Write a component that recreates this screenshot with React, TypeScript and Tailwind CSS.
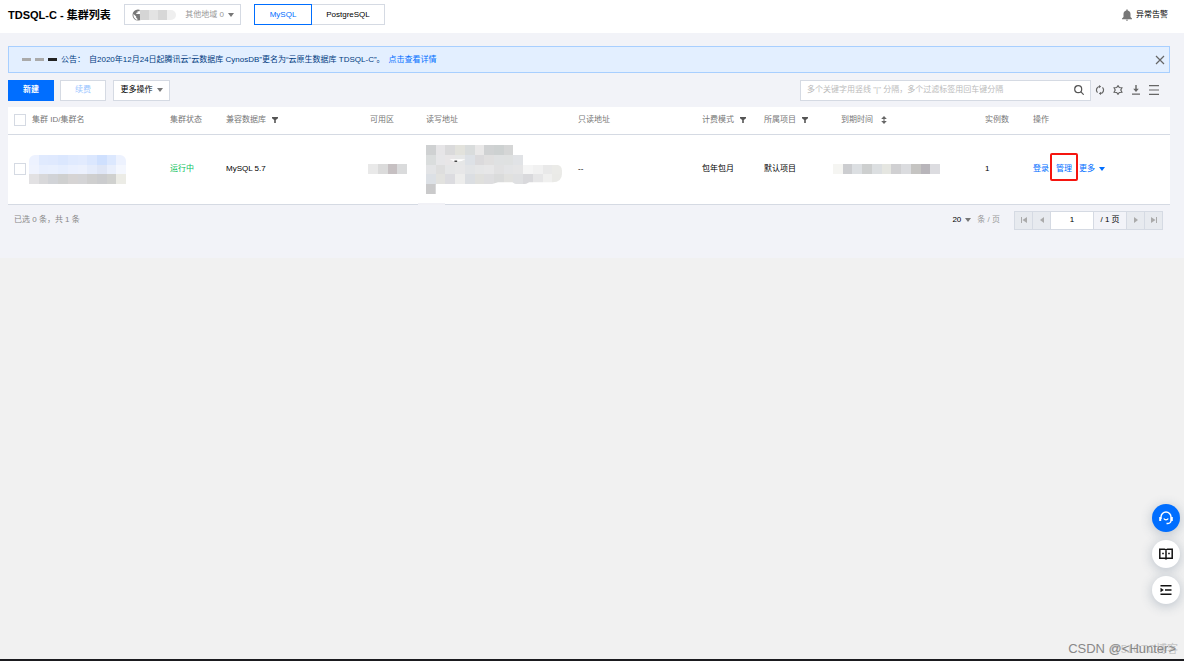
import React, { useState } from 'react';

interface MosaicProps {
  rows: string[][];
  className?: string;
  clip?: string;
  children?: React.ReactNode;
}

const CELL = 29;

// Censored values: a patchwork of soft blocks, rows may differ in length
const Mosaic: React.FC<MosaicProps> = ({ rows, className = '', clip, children }) => {
  const id = React.useId();
  const cols = Math.max(...rows.map((row) => row.length));
  return (
    <svg
      className={`block max-w-none ${className}`}
      viewBox={`0 0 ${cols * CELL} ${rows.length * CELL}`}
      preserveAspectRatio="none"
      aria-hidden="true"
    >
      {clip && (
        <clipPath id={id}>
          <path d={clip} />
        </clipPath>
      )}
      <g clipPath={clip ? `url(#${id})` : undefined} shapeRendering="crispEdges">
        {rows.map((row, y) =>
          row.map((fill, x) => (
            <rect key={`${x}-${y}`} x={x * CELL} y={y * CELL} width={CELL} height={CELL} fill={fill} />
          ))
        )}
      </g>
      {children}
    </svg>
  );
};

const idRows = [
  ['#edf2ff', '#e0eafe', '#dfe9fe', '#dbe7fe', '#e0eafe', '#e2ebfe', '#dbe7fe', '#cfe0fe', '#dce8fe', '#edf2fe'],
  ['#eff3fe', '#e8effe', '#e9f0fe', '#e6eefe', '#eaf0fe', '#ecf1fd', '#e5ecfb', '#dfe6f6', '#e9effc', '#f4f7fe'],
  ['#e2e1e3', '#d8d8da', '#d1d3d7', '#cfd0d0', '#d6d4d4', '#d4d4d6', '#cfcfcf', '#cbccce', '#d0d1cf', '#ecece6'],
];

const zoneRows = [['#e9e9e9', '#dbdbdb', '#c6c0c2', '#dadbdc']];

const addressRows = [
  ['#cfd1d2', '#e6e5e7', '#dadadb', '#e2e2dc', '#d9dcdc', '#e9e8e8', '#d0d2d3', '#cdd1d1', '#d5d6d6'],
  ['#dadddd', '#e6e6e8', '#e8e6e7', '#e6e7e7', '#dde1e6', '#dbdadc', '#e0dfdf', '#dfe1e2', '#dfe1e1', '#e1e3e6'],
  ['#e3e4e6', '#dedede', '#e5e6e7', '#e7e7e8', '#e2e4e6', '#e5e6e7', '#e7e7e8', '#e1e1e2', '#e3e4e6', '#e5e5e6', '#f5f5f5', '#f1f1f1', '#e9e9e9', '#ebebe8'],
  ['#dce0e5', '#e2e2df', '#dcdce0', '#ededec', '#dbdee2', '#e0e0dd', '#dedee0', '#dadbdb', '#e1e1df', '#dfe0e2', '#d9d9dc', '#e6e6e7', '#f0f0ef', '#eaeae7'],
  ['#cacacb'],
];

const dateRows = [
  ['#f5f5f2', '#cccdd0', '#dcdfe2', '#cdcfcf', '#dcdfe1', '#e5e6e1', '#d0d0d2', '#dbdcdf', '#c5c4c2', '#b8b5ba', '#dcdce0'],
];

const regionRows = [['#d5d5d5', '#e3e3e3', '#d7d7d7', '#efefef']];

const Caret: React.FC<{ className?: string }> = ({ className = '' }) => (
  <svg className={`h-1 w-1.5 ${className}`} viewBox="0 0 6 4" fill="currentColor" aria-hidden="true">
    <path d="M0 0h6L3 4z" />
  </svg>
);

const FilterIcon = () => (
  <svg className="size-1.5" viewBox="0 0 6 6" fill="#555" aria-hidden="true">
    <path d="M0 0h6v1.2L3.8 3v3H2.2V3L0 1.2z" />
  </svg>
);

const SortIcon = () => (
  <svg className="ml-0.5 h-2 w-1.5" viewBox="0 0 6 8" fill="#666" aria-hidden="true">
    <path d="M3 0l2.8 3H.2zM3 8L.2 5h5.6zM2.5 2h1v4h-1z" />
  </svg>
);

const columns = [
  { title: '集群 ID/集群名', width: 'w-[138px]' },
  { title: '集群状态', width: 'w-14' },
  { title: '兼容数据库', width: 'w-36', icon: <FilterIcon /> },
  { title: '可用区', width: 'w-14' },
  { title: '读写地址', width: 'w-[152px]' },
  { title: '只读地址', width: 'w-[124px]' },
  { title: '计费模式', width: 'w-[62px]', icon: <FilterIcon /> },
  { title: '所属项目', width: 'w-[77px]', icon: <FilterIcon /> },
  { title: '到期时间', width: 'w-36', icon: <SortIcon /> },
  { title: '实例数', width: 'w-12' },
  { title: '操作', width: '' },
];

const Checkbox: React.FC<{ label: string }> = ({ label }) => (
  <input
    type="checkbox"
    aria-label={label}
    className="ml-1.5 block size-3 appearance-none border border-[#d5dae3] bg-white checked:bg-[#006eff]"
  />
);

const Header: React.FC = () => {
  const [engine, setEngine] = useState('MySQL');
  const active = 'relative border-[#006eff] text-[#006eff]';
  const idle = 'border-[#d5dae3] text-black';

  return (
    <header className="flex h-[33px] items-center bg-white pb-1 pl-2 pr-4">
      <h1 className="w-[116px] whitespace-nowrap text-[11px] font-bold leading-4 text-black">TDSQL-C - 集群列表</h1>
      <button className="flex h-[21px] w-[117px] items-center border border-[#d5dae3] pl-[7px] pr-1.5 text-[#999]">
        <svg className="size-3 shrink-0" viewBox="0 0 12 12" aria-hidden="true">
          <circle cx="6" cy="6" r="5.5" fill="#777" />
          <path
            d="M1.500 5l2.700 2.500v1.200l1.200 1v1.300C2.800 10.500 1 7.800 1.500 5zM7.500 1.300v1H5.500v1.400H4.300v1.200h3.600v2l1.600 1.200C11.200 6 10.500 2.500 7.500 1.300z"
            fill="#fff"
          />
        </svg>
        <Mosaic rows={regionRows} className="-ml-1 h-2.5 w-9 rounded-r-full" />
        <span className="ml-auto">其他地域 0</span>
        <Caret className="ml-1 text-[#777]" />
      </button>
      <div className="ml-[13px] flex">
        <button
          onClick={() => setEngine('MySQL')}
          className={`h-[21px] w-[58px] border ${engine === 'MySQL' ? active : idle}`}
        >
          MySQL
        </button>
        <button
          onClick={() => setEngine('PostgreSQL')}
          className={`-ml-px h-[21px] w-[74px] border ${engine === 'PostgreSQL' ? active : idle}`}
        >
          PostgreSQL
        </button>
      </div>
      <a href="#alarm" className="ml-auto flex items-center gap-1 text-black">
        <svg className="h-3 w-2.5" viewBox="0 0 10 12" fill="#777" aria-hidden="true">
          <path d="M4.300 .5h1.400v1C7.500 1.900 8.500 3.300 8.500 5v3L10 9.500v.7H0v-.7L1.500 8V5c0-1.700 1-3.100 2.800-3.500zM3.700 10.800h2.600L5 12z" />
        </svg>
        异常告警
      </a>
    </header>
  );
};

const Notice: React.FC<{ onClose: () => void }> = ({ onClose }) => (
  <div className="flex h-[27px] items-center border border-[#a8cfff] bg-[#e3efff] pl-[13px] pr-1 text-[#003b80]">
    <div className="flex gap-1">
      <i className="h-[3px] w-[9px] bg-[#aaa]" />
      <i className="h-[3px] w-[9px] bg-[#aaa]" />
      <i className="h-[3px] w-[9px] bg-[#222]" />
    </div>
    <p className="ml-1 flex gap-1 whitespace-nowrap">
      <span>公告：</span>
      <span>自2020年12月24日起腾讯云“云数据库 CynosDB”更名为“云原生数据库 TDSQL-C”。</span>
      <a href="#detail" className="text-[#006eff]">点击查看详情</a>
    </p>
    <button aria-label="关闭" onClick={onClose} className="ml-auto">
      <svg className="size-2.5" viewBox="0 0 10 10" stroke="#666" strokeWidth="1.2" fill="none">
        <path d="M1 1l8 8M9 1L1 9" />
      </svg>
    </button>
  </div>
);

const Toolbar = () => (
  <div className="mt-1.5 flex h-[22px] items-center">
    <button className="h-[21px] w-[46px] bg-[#006eff] font-bold text-white">新建</button>
    <button disabled className="ml-1.5 h-[21px] w-[46px] border border-[#d5dae3] bg-white text-[#99c5ff]">续费</button>
    <button className="ml-[7px] flex h-[21px] w-[57px] items-center justify-center gap-1 border border-[#d5dae3] bg-white text-black">
      更多操作
      <Caret className="text-[#777]" />
    </button>
    <div className="ml-auto flex h-[21px] w-[291px] items-center border border-[#d5dae3] bg-white px-1.5">
      <input
        aria-label="搜索"
        placeholder={'多个关键字用竖线 "|" 分隔，多个过滤标签用回车键分隔'}
        className="min-w-0 flex-1 outline-none placeholder:text-[#bbb]"
      />
      <button aria-label="查询">
        <svg className="size-2.5" viewBox="0 0 10 10" fill="none" stroke="#555" strokeWidth="1.2">
          <circle cx="4.200" cy="4.200" r="3.500" />
          <path d="M6.700 6.700L9.700 9.700" />
        </svg>
      </button>
    </div>
    <div className="ml-1 mr-[11px] flex items-center gap-2 text-[#666]">
      <button aria-label="刷新">
        <svg className="size-2.5" viewBox="0 0 10 10" fill="none" stroke="currentColor" strokeWidth="1.200">
          <path d="M4.300 1.500A3.600 3.600 0 0 0 2.500 7.600M5.700 8.500A3.600 3.600 0 0 0 7.500 2.400" />
          <path d="M4 0L6.200 1.500L4 3.200zM6 10L3.800 8.500L6 6.800z" fill="currentColor" stroke="none" />
        </svg>
      </button>
      <button aria-label="设置">
        <svg className="size-2.5" viewBox="0 0 10 10" fill="none" stroke="currentColor" strokeWidth="1.200">
          <path d="M5 .7L6.300 2.500L8.900 2.700L7.800 5L8.900 7.300L6.300 7.500L5 9.300L3.700 7.500L1.100 7.300L2.200 5L1.100 2.700L3.700 2.500z" />
        </svg>
      </button>
      <button aria-label="下载">
        <svg className="size-2.5" viewBox="0 0 10 10" fill="currentColor">
          <path d="M4.300 0h1.400v3.800H7.800L5 7L2.200 3.800h2.100zM1 8.400h8v1.300H1z" />
        </svg>
      </button>
      <button aria-label="更多">
        <svg className="size-2.5" viewBox="0 0 10 10" fill="currentColor">
          <path d="M0 0h10v1.200H0zM0 4.400h10v1.200H0zM0 8.800h10v1.200H0z" />
        </svg>
      </button>
    </div>
  </div>
);

const ClusterTable = () => (
  <table className="mt-1.5 w-full table-fixed border-collapse bg-white text-left">
    <thead>
      <tr className="h-[27px] border-b border-[#d5dae3] text-[#777]">
        <th className="w-6 p-0">
          <Checkbox label="全选" />
        </th>
        {columns.map((col) => (
          <th key={col.title} className={`p-0 font-normal ${col.width}`}>
            <span className="flex items-center gap-1.5 whitespace-nowrap">
              {col.title}
              {col.icon}
            </span>
          </th>
        ))}
      </tr>
    </thead>
    <tbody>
      <tr className="h-[70px] border-b border-[#d5dae3] text-black">
        <td className="p-0">
          <Checkbox label="选择集群" />
        </td>
        <td className="p-0">
          <Mosaic rows={idRows} className="-ml-[3px] h-[29px] w-[97px] rounded-t-md" />
        </td>
        <td className="p-0 text-[#0abf5b]">运行中</td>
        <td className="p-0">MySQL 5.7</td>
        <td className="p-0">
          <Mosaic rows={zoneRows} className="-ml-0.5 h-2.5 w-[39px]" />
        </td>
        <td className="relative p-0">
          <Mosaic
            rows={addressRows}
            className="h-[49px] w-[136px]"
            clip="M0 0H264V29H290V58H385Q406 58 406 76V85Q406 110 378 110H308Q300 116 290 116H274Q264 116 258 110H215L195 116H29V145H0z"
          >
            <path d="M70 42H118Q94 56 70 42z" fill="#fff" />
            <path d="M85 46h8v4h-8z" fill="#333" />
          </Mosaic>
          <span className="absolute -bottom-px -left-2 h-0.5 w-[27px] bg-[#f1f1f6]" />
        </td>
        <td className="p-0">--</td>
        <td className="p-0">包年包月</td>
        <td className="p-0">默认项目</td>
        <td className="p-0">
          <Mosaic rows={dateRows} className="-ml-2 h-2.5 w-[107px]" />
        </td>
        <td className="p-0">1</td>
        <td className="p-0">
          <div className="flex items-center gap-[7px] whitespace-nowrap text-[#006eff]">
            <a href="#login">登录</a>
            <a href="#manage" className="relative">
              管理
              <span className="absolute -inset-x-1.5 -bottom-1.5 -top-2.5 rounded-xs border-2 border-[#f5150f]" />
            </a>
            <a href="#more" className="flex items-center gap-1">
              更多
              <Caret />
            </a>
          </div>
        </td>
      </tr>
    </tbody>
  </table>
);

const pageButton = 'flex w-[18px] items-center justify-center border-r border-[#d5dae3] bg-[#e7eaef] text-[#aaa]';

const Pagination = () => (
  <div className="mr-[7px] flex items-center">
    <button className="flex items-center gap-1 text-black">
      20
      <Caret className="text-[#777]" />
    </button>
    <span className="ml-1.5 text-[#999]">条 / 页</span>
    <div className="ml-3.5 flex h-[19px] border border-r-0 border-[#d5dae3]">
      <button aria-label="首页" className={pageButton}>
        <svg className="size-1.5" viewBox="0 0 6 6" fill="currentColor">
          <path d="M0 0h1v6H0zM6 0v6L1.500 3z" />
        </svg>
      </button>
      <button aria-label="上一页" className={pageButton}>
        <svg className="size-1.5" viewBox="0 0 6 6" fill="currentColor">
          <path d="M5 0v6L1 3z" />
        </svg>
      </button>
      <input
        aria-label="页码"
        defaultValue="1"
        className="w-[43px] border-r border-[#d5dae3] bg-white text-center text-black"
      />
      <span className="flex w-[33px] items-center justify-center border-r border-[#d5dae3] text-black">/ 1 页</span>
      <button aria-label="下一页" className={pageButton}>
        <svg className="size-1.5" viewBox="0 0 6 6" fill="currentColor">
          <path d="M1 0v6l4-3z" />
        </svg>
      </button>
      <button aria-label="尾页" className={pageButton}>
        <svg className="size-1.5" viewBox="0 0 6 6" fill="currentColor">
          <path d="M5 0h1v6H5zM0 0v6l4.500-3z" />
        </svg>
      </button>
    </div>
  </div>
);

const floatButton = 'flex size-7 items-center justify-center rounded-full shadow-[0_2px_12px_rgba(54,78,110,0.3)]';

const FloatingTools = () => (
  <div className="absolute bottom-[55px] right-1 flex flex-col gap-2">
    <button aria-label="客服" className={`${floatButton} bg-[#006eff]`}>
      <svg className="size-3.5" viewBox="0 0 14 14" fill="none" stroke="#fff" strokeWidth="1.400">
        <path d="M2 8V6a5 5 0 0 1 10 0v3.500a3 3 0 0 1-3 3H7.500M4.800 7.500c1 1.700 3.400 1.700 4.400 0" />
        <path d="M1.200 6v4M12.800 6v4" strokeWidth="2" />
      </svg>
    </button>
    <button aria-label="文档" className={`${floatButton} bg-white`}>
      <svg className="size-3.5" viewBox="0 0 14 14" fill="none" stroke="#111" strokeWidth="1.500">
        <path d="M.8 2.200h4.700L7 3l1.500-.8h4.700v9H8.500L7 12l-1.500-.8H.8zM7 3v9" />
        <path d="M3.200 6.500h1.600M9.200 6.500h1.600" />
      </svg>
    </button>
    <button aria-label="展开" className={`${floatButton} bg-white`}>
      <svg className="size-3" viewBox="0 0 12 12" fill="#111">
        <path d="M.5 1h11v1.400H.5zM5 5.300h6.500v1.400H5zM.5 9.600h11V11H.5zM.5 3.800L3.800 6L.5 8.200z" />
      </svg>
    </button>
  </div>
);

const App: React.FC = () => {
  const [showNotice, setShowNotice] = useState(true);

  return (
    <div className="relative flex min-h-screen flex-col overflow-hidden border-b-2 border-[#1b1b1f] bg-[#f1f1f1] font-['Liberation_Sans','Noto_Sans_CJK_SC',sans-serif] text-[8px] leading-3">
      <Header />
      <main className="bg-[#f2f3f8] pb-7 pl-2 pr-3.5 pt-[13px]">
        {showNotice && <Notice onClose={() => setShowNotice(false)} />}
        <Toolbar />
        <ClusterTable />
        <div className="flex items-center justify-between pl-1.5 pt-1.5">
          <span className="text-[#888]">已选 0 条，共 1 条</span>
          <Pagination />
        </div>
      </main>
      <FloatingTools />
      <div className="absolute bottom-0 right-1.5 whitespace-nowrap text-[13px] leading-5 text-[#888]">
        <span className="absolute right-0 top-0 text-[11px] text-[#c4c4c4]">@51CTO博客</span>
        <span className="relative mr-0.5">CSDN @&lt;Hunter&gt;</span>
      </div>
    </div>
  );
};

export default App;
